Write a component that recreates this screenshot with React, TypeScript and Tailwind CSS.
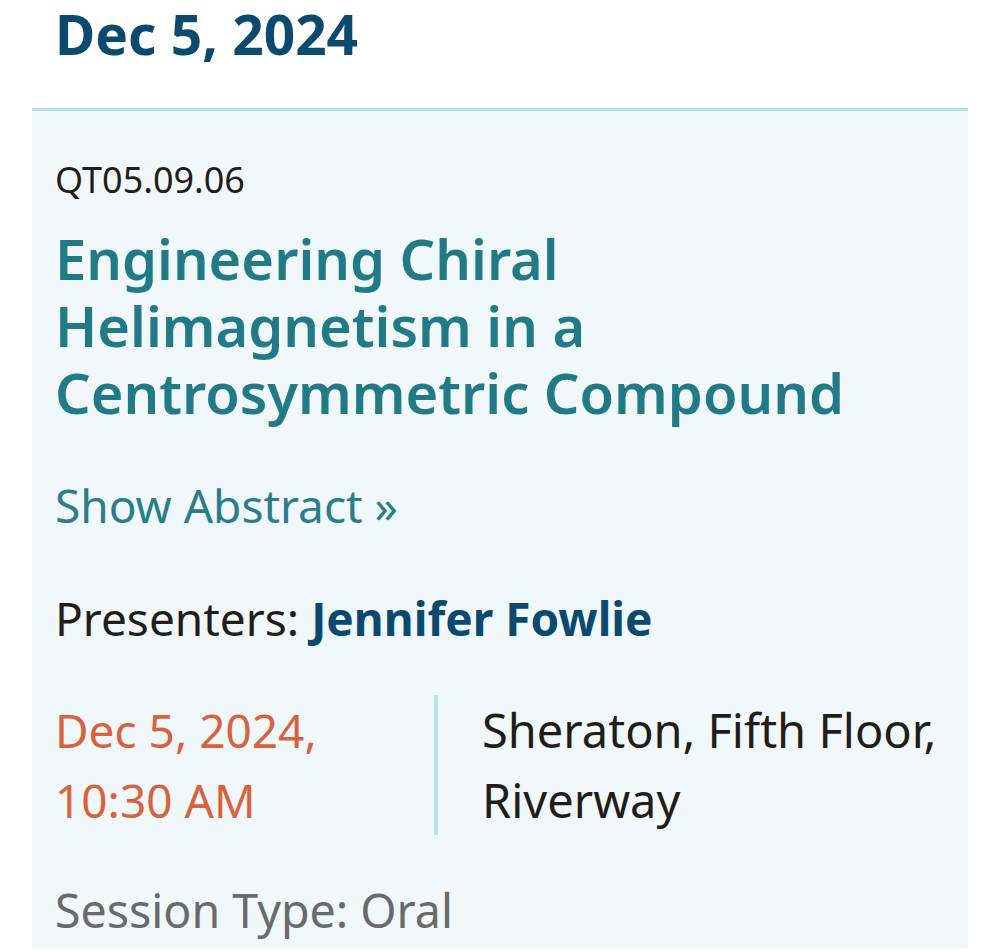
import React from "react";

export default function App() {
  return (
    <div className="min-h-[950px] bg-white px-[32px]" style={{ fontFamily: '"Noto Sans", "Open Sans", sans-serif' }}>
      <h1 className="pl-[23px] pt-[1px] text-[55px] font-bold leading-[66px] text-[#0b4a6e]">Dec 5, 2024</h1>
      <div className="mt-[41px] min-h-[840px] border-t-[3px] border-[#bde0e8] bg-[#f0f8fc] px-[23px] pt-[49px]">
        <div className="text-[36px] leading-[40px] text-[#231c17]">QT05.09.06</div>
        <h2 className="mt-[25px] text-[56px] font-semibold leading-[67px] text-[#217a86]">
          Engineering Chiral Helimagnetism in a Centrosymmetric Compound
        </h2>
        <div className="mt-[49px] text-[46px] leading-[60px] text-[#2a7e8a]">Show Abstract »</div>
        <div className="mt-[53px] text-[46px] leading-[60px] text-[#231c17]">
          Presenters: <span className="font-bold text-[#0b4a6e]">Jennifer Fowlie</span>
        </div>
        <div className="mt-[47px] flex">
          <div className="w-[379px] shrink-0 pr-[20px] text-[46px] leading-[70px] text-[#d9623c]">
            Dec 5, 2024,
            <br />
            10:30 AM
          </div>
          <div className="border-l-[4px] border-[#b9e2ea] pl-[44px] text-[47px] leading-[70px] text-[#231c17]">
            Sheraton, Fifth Floor, Riverway
          </div>
        </div>
        <div className="mt-[45px] text-[46.5px] leading-[60px] text-[#6a6a6a]">Session Type: Oral</div>
      </div>
    </div>
  );
}
